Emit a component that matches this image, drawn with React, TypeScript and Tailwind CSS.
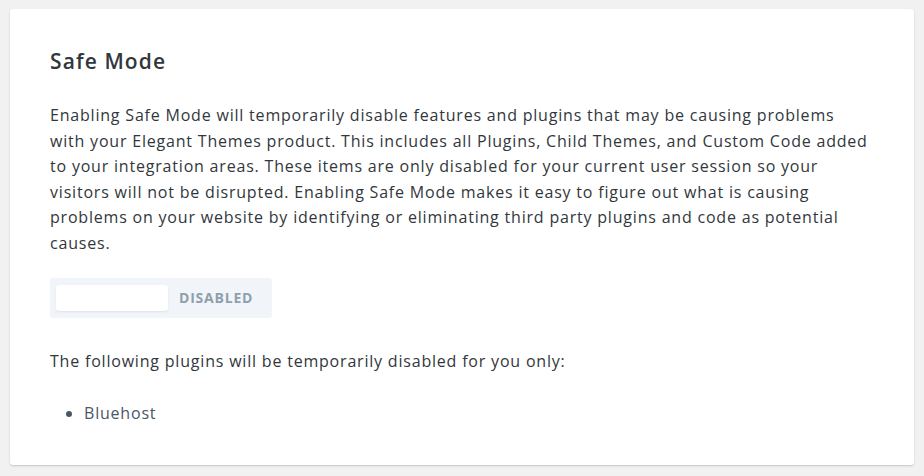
export default function App() {
  return (
    <div className="min-h-[476px] bg-[#f1f1f1] px-[10px] pt-[9px] pb-[11px]" style={{ fontFamily: '"Open Sans", sans-serif' }}>
      <div className="bg-white rounded-[3px] shadow-[0_1px_2px_rgba(0,0,0,0.18)] px-10 pt-[36px] pb-[40px] h-[456px]">
        <h2 className="text-[21px] leading-[32px] font-semibold tracking-[1.1px] text-[#32373c] mb-[26px]">Safe Mode</h2>
        <p className="text-[16px] leading-[25.6px] font-medium tracking-[0.8px] text-[#32373c] mb-[21px]">
          Enabling Safe Mode will temporarily disable features and plugins that may be causing problems
          with your Elegant Themes product. This includes all Plugins, Child Themes, and Custom Code added
          to your integration areas. These items are only disabled for your current user session so your
          visitors will not be disrupted. Enabling Safe Mode makes it easy to figure out what is causing
          problems on your website by identifying or eliminating third party plugins and code as potential
          causes.
        </p>
        <div className="flex items-center w-[222px] h-[40px] bg-[#f1f5f9] rounded-[3px] px-[6px] gap-[11px]">
          <div className="w-[112px] h-[26px] bg-white rounded-[3px] shadow-[0_1px_2px_rgba(0,0,0,0.08)]" />
          <span className="text-[14px] font-bold tracking-[0.8px] text-[#8e9fae]">DISABLED</span>
        </div>
        <p className="mt-[31px] text-[16px] leading-[25.6px] font-medium tracking-[0.8px] text-[#32373c]">
          The following plugins will be temporarily disabled for you only:
        </p>
        <ul className="mt-[27px] pl-[34px] list-disc marker:text-[#4a5568]">
          <li className="text-[16px] leading-[25.6px] tracking-[0.8px] text-[#4a5568]">Bluehost</li>
        </ul>
      </div>
    </div>
  );
}
